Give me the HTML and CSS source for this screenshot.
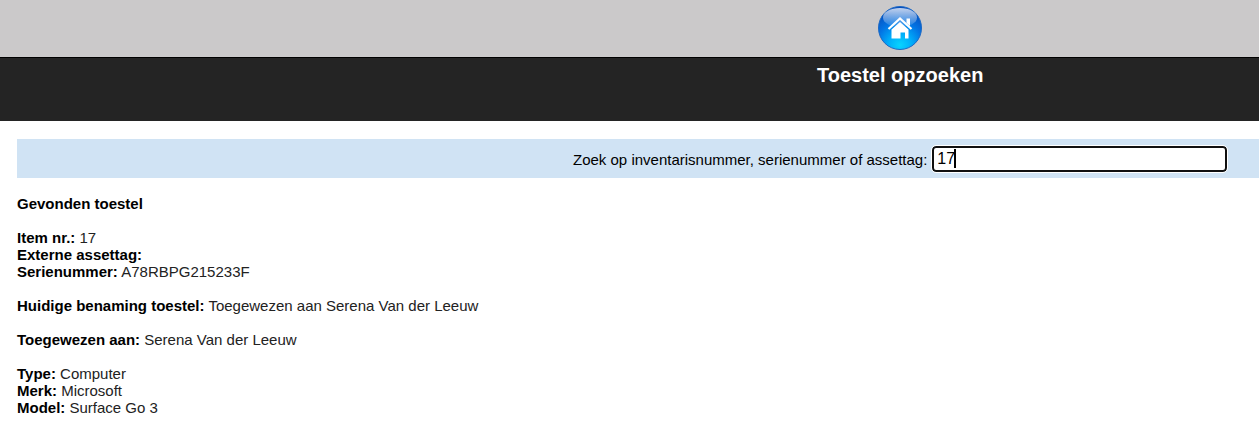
FILE: index.html
```html
<!DOCTYPE html>
<html lang="nl">
<head>
<meta charset="utf-8">
<title>Toestel opzoeken</title>
<link rel="stylesheet" href="styles.css">
</head>
<body>
<div class="page">
  <nav class="topbar">
    <a class="home" href="#" aria-label="Home">
      <svg width="46" height="46" viewBox="0 0 46 46" aria-hidden="true">
        <defs>
          <radialGradient id="ball" cx="0.5" cy="0.9" r="0.9">
            <stop offset="0" stop-color="#08d4ff"/>
            <stop offset="0.3" stop-color="#00aefa"/>
            <stop offset="0.6" stop-color="#0274e4"/>
            <stop offset="1" stop-color="#0648b8"/>
          </radialGradient>
          <linearGradient id="gloss" x1="0" y1="0" x2="0" y2="1">
            <stop offset="0" stop-color="#fff" stop-opacity="0.75"/>
            <stop offset="1" stop-color="#fff" stop-opacity="0.08"/>
          </linearGradient>
        </defs>
        <circle cx="23" cy="23" r="21.500" fill="url(#ball)" stroke="#1c68c4" stroke-width="1"/>
        <ellipse cx="23" cy="12.500" rx="17" ry="9.500" fill="url(#gloss)"/>
        <path d="M29.500 13.500h3.500v7.500L29.500 18z" fill="#fff"/>
        <path d="M11.500 24L23 13.500l11.500 10.500" fill="none" stroke="#fff" stroke-width="2.200"/>
        <path d="M14.500 24.500L23 17l8.500 7.500V33.500h-3.500V27.500h-4.500v6H14.500z" fill="#fff"/>
      </svg>
    </a>
  </nav>
  <header class="titlebar"><h1 class="title">Toestel opzoeken</h1></header>
  <main class="content">
    <form class="search">
      <label for="query">Zoek op inventarisnummer, serienummer of assettag:</label>
      <span class="field">
        <input class="query" id="query" type="text" value="17">
        <span class="caret"></span>
      </span>
    </form>
    <section class="result">
      <h2 class="heading">Gevonden toestel</h2>
      <p class="group">
        <b>Item nr.:</b> 17<br>
        <b>Externe assettag:</b><br>
        <b>Serienummer:</b> A78RBPG215233F
      </p>
      <p class="group"><b>Huidige benaming toestel:</b> Toegewezen aan Serena Van der Leeuw</p>
      <p class="group"><b>Toegewezen aan:</b> Serena Van der Leeuw</p>
      <p class="group">
        <b>Type:</b> Computer<br>
        <b>Merk:</b> Microsoft<br>
        <b>Model:</b> Surface Go 3
      </p>
    </section>
  </main>
</div>
</body>
</html>
```
FILE: styles.css
```css
* {
  box-sizing: border-box;
}

body {
  margin: 0;
  overflow: hidden;
  background: #fff;
  color: #000;
  font-family: "Liberation Sans", Arial, sans-serif;
  font-size: 15px;
  line-height: 17px;
}

/* The page is wider than the window and centres its bars on its own width. */
.page {
  width: 143vw;
}

.topbar {
  display: flex;
  justify-content: center;
  padding: 5px 0 6px;
  background: #cbc9ca;
}

.home,
.home svg {
  display: block;
}

.titlebar {
  padding: 6px 0 34px;
  border-top: 1px solid #000;
  background: #242424;
  text-align: center;
}

.title {
  margin: 0;
  color: #fff;
  font-size: 20px;
  line-height: 23px;
}

.content {
  padding: 18px 17px;
}

.search {
  display: flex;
  justify-content: center;
  align-items: center;
  gap: 5px;
  padding: 7px 0 6px;
  background: #d0e3f4;
}

.field {
  position: relative;
}

.query {
  display: block;
  width: 295px;
  height: 26px;
  padding: 0 3px;
  border: 2px solid #101010;
  border-radius: 4px;
  outline: 1px solid #fff;
  outline-offset: 0;
  background: #fff;
  color: #000;
  font-family: inherit;
  font-size: 16px;
}

.caret {
  position: absolute;
  top: 3px;
  left: 22px;
  width: 2px;
  height: 19px;
  background: #000;
}

.result {
  padding-top: 17px;
}

.heading {
  margin: 0 0 17px;
  font-size: 15px;
  line-height: 17px;
}

.group {
  margin: 0 0 17px;
  color: #222;
}

.group b {
  color: #000;
}
```
